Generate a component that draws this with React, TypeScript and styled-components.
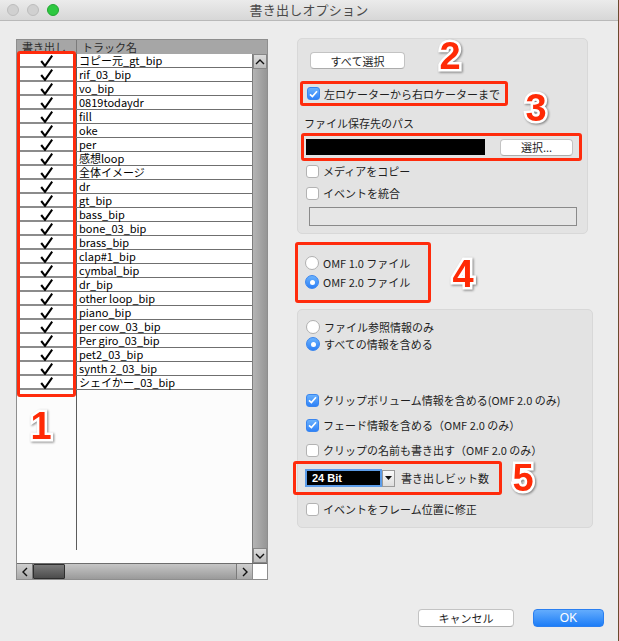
import React from "react";
import styled, { createGlobalStyle } from "styled-components";

const GlobalStyle = createGlobalStyle`
  html, body {
    margin: 0;
    padding: 0;
  }
  body {
    background: #6b4a2e;
    font-family: "Noto Sans CJK JP", "Noto Sans", sans-serif;
    color: #222;
  }
`;

const tracks = [
  "コピー元_gt_bip",
  "rif_03_bip",
  "vo_bip",
  "0819todaydr",
  "fill",
  "oke",
  "per",
  "感想loop",
  "全体イメージ",
  "dr",
  "gt_bip",
  "bass_bip",
  "bone_03_bip",
  "brass_bip",
  "clap#1_bip",
  "cymbal_bip",
  "dr_bip",
  "other loop_bip",
  "piano_bip",
  "per cow_03_bip",
  "Per giro_03_bip",
  "pet2_03_bip",
  "synth 2_03_bip",
  "シェイかー_03_bip",
];

const App = () => {
  return (
    <>
      <GlobalStyle />
      <Window>
        <TitleBar>
          <Lights>
            <Light />
            <Light />
            <Light $color="#2dc840" $edge="#22a632" />
          </Lights>
          <Title>書き出しオプション</Title>
          <span />
        </TitleBar>

        <Body>
          <Main>
            <Table>
              <Header>
                <HeadCell $w={60}>書き出し</HeadCell>
                <HeadCell>トラック名</HeadCell>
              </Header>
              <TableBody>
                <RowsArea>
                  {tracks.map((name) => (
                    <Row key={name}>
                      <CheckCell>
                        <svg width="13" height="12" viewBox="0 0 13 12">
                          <path d="M1.2 6 L5 10.8 L12.2 0.6" fill="none" stroke="#000" strokeWidth="2.1" />
                        </svg>
                      </CheckCell>
                      <NameCell>{name}</NameCell>
                    </Row>
                  ))}
                  <Filler>
                    <FillerColumn />
                  </Filler>
                </RowsArea>
                <VScroll>
                  <ArrowButton>
                    <svg width="10" height="6" viewBox="0 0 10 6">
                      <path d="M1 5 L5 1 L9 5" fill="none" stroke="#111" strokeWidth="1.4" />
                    </svg>
                  </ArrowButton>
                  <ArrowButton>
                    <svg width="10" height="6" viewBox="0 0 10 6">
                      <path d="M1 1 L5 5 L9 1" fill="none" stroke="#111" strokeWidth="1.4" />
                    </svg>
                  </ArrowButton>
                </VScroll>
              </TableBody>
              <HScroll>
                <HTrack>
                  <HArrow>
                    <svg width="6" height="10" viewBox="0 0 6 10">
                      <path d="M5 1 L1 5 L5 9" fill="none" stroke="#111" strokeWidth="1.4" />
                    </svg>
                  </HArrow>
                  <Thumb />
                  <HSpace />
                  <HArrow $right>
                    <svg width="6" height="10" viewBox="0 0 6 10">
                      <path d="M1 1 L5 5 L1 9" fill="none" stroke="#111" strokeWidth="1.4" />
                    </svg>
                  </HArrow>
                </HTrack>
                <Corner />
              </HScroll>
              <ColumnMark />
            </Table>

            <RightColumn>
              <Panel $w={291} $h={196}>
                <PlainButton $w={95} $ml={12} $mt={13}>
                  すべて選択
                </PlainButton>
                <Highlight $w={208} $h={25} $ml={2} $mt={12} $pl={4}>
                  <Check checked />
                  <Label>左ロケーターから右ロケーターまで</Label>
                </Highlight>
                <Caption>ファイル保存先のパス</Caption>
                <Highlight $w={281} $h={28} $ml={3} $mt={3} $pl={2} $gap={15}>
                  <PathField />
                  <PlainButton $w={73}>選択...</PlainButton>
                </Highlight>
                <OptionRow $mt={3}>
                  <Check />
                  <Label>メディアをコピー</Label>
                </OptionRow>
                <OptionRow $mt={8}>
                  <Check />
                  <Label>イベントを統合</Label>
                </OptionRow>
                <EmptyField />
              </Panel>

              <FormatBox>
                <OptionRow $ml={0}>
                  <Radio />
                  <Label>OMF 1.0 ファイル</Label>
                </OptionRow>
                <OptionRow $ml={0} $mt={5}>
                  <Radio selected />
                  <Label>OMF 2.0 ファイル</Label>
                </OptionRow>
              </FormatBox>

              <Panel $w={296} $h={219} $mt={6} $pt={10}>
                <OptionRow>
                  <Radio />
                  <Label>ファイル参照情報のみ</Label>
                </OptionRow>
                <OptionRow $mt={3}>
                  <Radio selected />
                  <Label>すべての情報を含める</Label>
                </OptionRow>
                <OptionRow $mt={42}>
                  <Check checked />
                  <Label>クリップボリューム情報を含める(OMF 2.0 のみ)</Label>
                </OptionRow>
                <OptionRow $mt={11}>
                  <Check checked />
                  <Label>フェード情報を含める（OMF 2.0 のみ）</Label>
                </OptionRow>
                <OptionRow $mt={11}>
                  <Check />
                  <Label>クリップの名前も書き出す（OMF 2.0 のみ）</Label>
                </OptionRow>
                <Highlight $w={209} $h={34} $ml={-5} $mt={4} $pl={9}>
                  <BitSelect>24 Bit</BitSelect>
                  <SelectArrow>
                    <svg width="7" height="4" viewBox="0 0 7 4">
                      <path d="M0 0 L7 0 L3.5 4 Z" fill="#111" />
                    </svg>
                  </SelectArrow>
                  <Label $ml={6}>書き出しビット数</Label>
                </Highlight>
                <OptionRow $mt={7}>
                  <Check />
                  <Label>イベントをフレーム位置に修正</Label>
                </OptionRow>
              </Panel>
            </RightColumn>
          </Main>

          <Footer>
            <PlainButton $w={96} $h={18}>
              キャンセル
            </PlainButton>
            <OkButton>OK</OkButton>
          </Footer>
        </Body>

        <Num $x={41} $y={426}>1</Num>
        <Num $x={450} $y={56}>2</Num>
        <Num $x={536} $y={108}>3</Num>
        <Num $x={463} $y={274}>4</Num>
        <Num $x={523} $y={478}>5</Num>
      </Window>
    </>
  );
};

const Check = ({ checked }: { checked?: boolean }) => (
  <CheckBox $checked={checked}>
    {checked && (
      <svg width="9" height="8" viewBox="0 0 9 8">
        <path d="M1 4.3 L3.4 6.6 L8 1.2" fill="none" stroke="#fff" strokeWidth="1.7" />
      </svg>
    )}
  </CheckBox>
);

const Radio = ({ selected }: { selected?: boolean }) => (
  <RadioCircle $selected={selected}>{selected && <RadioDot />}</RadioCircle>
);

export default App;

const Window = styled.div`
  position: relative;
  width: 618px;
  height: 641px;
  background: #ececec;
  display: flex;
  flex-direction: column;
  overflow: hidden;
`;

const TitleBar = styled.div`
  height: 20px;
  border-bottom: 1px solid #b9b9b9;
  background: linear-gradient(#ebebeb, #d7d7d7);
  display: grid;
  grid-template-columns: 1fr auto 1fr;
  align-items: center;
`;

const Lights = styled.div`
  display: flex;
  gap: 8px;
  padding-left: 7px;
`;

const Light = styled.span<{ $color?: string; $edge?: string }>`
  width: 12px;
  height: 12px;
  border-radius: 50%;
  box-sizing: border-box;
  background: ${({ $color }) => $color || "#d0d0d0"};
  border: 1px solid ${({ $edge }) => $edge || "#bdbdbd"};
`;

const Title = styled.div`
  font-size: 13px;
  line-height: 16px;
  color: #4a4a4a;
  letter-spacing: 0.2px;
`;

const Body = styled.div`
  padding: 18px 14px 0 16px;
  display: flex;
  flex-direction: column;
`;

const Main = styled.div`
  display: flex;
  gap: 29px;
  align-items: flex-start;
`;

const Table = styled.div`
  position: relative;
  width: 252px;
  height: 541px;
  box-sizing: border-box;
  border: 1px solid #8e8e8e;
  background: #fcfcfc;
  display: flex;
  flex-direction: column;
`;

const Header = styled.div`
  height: 14px;
  flex: none;
  display: flex;
  background: #a6a6a6;
`;

const HeadCell = styled.div<{ $w?: number }>`
  ${({ $w }) => ($w ? `width: ${$w}px; flex: none;` : "flex: 1;")}
  box-sizing: border-box;
  border-right: 1px solid #7b7b7b;
  padding-left: 5px;
  font-size: 11px;
  line-height: 15px;
  color: #2b2b2b;
  white-space: nowrap;
  overflow: hidden;
  &:last-child {
    border-right: none;
  }
`;

const TableBody = styled.div`
  flex: 1;
  display: flex;
  min-height: 0;
`;

const RowsArea = styled.div`
  flex: 1;
  display: flex;
  flex-direction: column;
`;

const Row = styled.div`
  height: 14px;
  display: flex;
`;

const CheckCell = styled.div`
  width: 60px;
  flex: none;
  box-sizing: border-box;
  border-right: 1px solid #5c5c5c;
  border-bottom: 2px solid #8b8b8b;
  background: #fff;
  display: flex;
  align-items: center;
  justify-content: center;
  padding-top: 1px;
`;

const NameCell = styled.div`
  flex: 1;
  box-sizing: border-box;
  border-bottom: 1px solid #6f6f6f;
  background: #fff;
  padding-left: 2px;
  font-size: 11px;
  line-height: 12px;
  color: #000;
  white-space: nowrap;
`;

const Filler = styled.div`
  flex: 1;
  display: flex;
  padding-bottom: 13px;
`;

const FillerColumn = styled.div`
  width: 60px;
  box-sizing: border-box;
  border-right: 1px solid #5c5c5c;
`;

const VScroll = styled.div`
  width: 14px;
  flex: none;
  background: linear-gradient(to right, #b4b4b4, #969696);
  border-left: 1px solid #7d7d7d;
  display: flex;
  flex-direction: column;
  justify-content: space-between;
`;

const ArrowButton = styled.div`
  height: 15px;
  box-sizing: border-box;
  border: 1px solid #878787;
  background: linear-gradient(#dcdcdc, #bdbdbd);
  display: flex;
  align-items: center;
  justify-content: center;
`;

const HScroll = styled.div`
  height: 15px;
  flex: none;
  display: flex;
  border-top: 1px solid #6d6d6d;
`;

const HTrack = styled.div`
  flex: 1;
  display: flex;
  background: linear-gradient(#c6c6c6, #9a9a9a);
`;

const HArrow = styled.div<{ $right?: boolean }>`
  width: 16px;
  box-sizing: border-box;
  ${({ $right }) => ($right ? "border-left" : "border-right")}: 1px solid #7a7a7a;
  background: linear-gradient(#cfcfcf, #a9a9a9);
  display: flex;
  align-items: center;
  justify-content: center;
`;

const Thumb = styled.div`
  width: 32px;
  box-sizing: border-box;
  border: 1px solid #2e2e2e;
  border-radius: 1px;
  background: linear-gradient(#7a7a7a, #4c4c4c);
`;

const HSpace = styled.div`
  flex: 1;
`;

const Corner = styled.div`
  width: 14px;
  background: #fff;
  border-left: 1px solid #8e8e8e;
`;

const ColumnMark = styled.div`
  position: absolute;
  left: 0;
  top: 11px;
  width: 59px;
  height: 346px;
  box-sizing: border-box;
  border: 3px solid #ff2b0c;
  border-radius: 3px;
`;

const RightColumn = styled.div`
  display: flex;
  flex-direction: column;
  margin-top: -1px;
`;

const Panel = styled.div<{ $w: number; $h: number; $mt?: number; $pt?: number }>`
  width: ${({ $w }) => $w}px;
  height: ${({ $h }) => $h}px;
  margin-top: ${({ $mt }) => $mt || 0}px;
  padding-top: ${({ $pt }) => $pt || 0}px;
  box-sizing: border-box;
  background: #e3e3e3;
  border: 1px solid #d8d8d8;
  border-radius: 5px;
  display: flex;
  flex-direction: column;
  align-items: flex-start;
`;

const PlainButton = styled.div<{ $w: number; $h?: number; $ml?: number; $mt?: number }>`
  width: ${({ $w }) => $w}px;
  height: ${({ $h }) => $h || 17}px;
  margin-left: ${({ $ml }) => $ml || 0}px;
  margin-top: ${({ $mt }) => $mt || 0}px;
  flex: none;
  box-sizing: border-box;
  background: #fff;
  border: 1px solid #c3c3c3;
  border-bottom-color: #acacac;
  border-radius: 4px;
  display: flex;
  align-items: center;
  justify-content: center;
  font-size: 11px;
  line-height: 14px;
  color: #1d1d1d;
`;

const Highlight = styled.div<{
  $w: number;
  $h: number;
  $ml: number;
  $mt: number;
  $pl: number;
  $gap?: number;
}>`
  width: ${({ $w }) => $w}px;
  height: ${({ $h }) => $h}px;
  margin-left: ${({ $ml }) => $ml}px;
  margin-top: ${({ $mt }) => $mt}px;
  padding-left: ${({ $pl }) => $pl}px;
  gap: ${({ $gap }) => $gap || 0}px;
  flex: none;
  box-sizing: border-box;
  border: 3px solid #ff2b0c;
  border-radius: 3px;
  display: flex;
  align-items: center;
`;

const Label = styled.span<{ $ml?: number }>`
  margin-left: ${({ $ml }) => ($ml === undefined ? 4 : $ml)}px;
  font-size: 11px;
  line-height: 14px;
  color: #1e1e1e;
  white-space: nowrap;
`;

const Caption = styled.div`
  margin: 10px 0 0 6px;
  font-size: 11px;
  line-height: 14px;
  color: #1e1e1e;
`;

const PathField = styled.div`
  width: 179px;
  height: 16px;
  background: #000;
`;

const OptionRow = styled.div<{ $mt?: number; $ml?: number }>`
  height: 14px;
  margin-top: ${({ $mt }) => $mt || 0}px;
  margin-left: ${({ $ml }) => ($ml === undefined ? 8 : $ml)}px;
  display: flex;
  align-items: center;
`;

const CheckBox = styled.span<{ $checked?: boolean }>`
  width: 13px;
  height: 13px;
  flex: none;
  box-sizing: border-box;
  border-radius: 3px;
  display: flex;
  align-items: center;
  justify-content: center;
  background: ${({ $checked }) => ($checked ? "linear-gradient(#69b1fd, #2f82f8)" : "#fff")};
  border: 1px solid ${({ $checked }) => ($checked ? "#3a86ef" : "#b3b3b3")};
`;

const RadioCircle = styled.span<{ $selected?: boolean }>`
  width: 14px;
  height: 14px;
  flex: none;
  box-sizing: border-box;
  border-radius: 50%;
  display: flex;
  align-items: center;
  justify-content: center;
  background: ${({ $selected }) => ($selected ? "linear-gradient(#6ab2fd, #2d80f7)" : "#fff")};
  border: 1px solid ${({ $selected }) => ($selected ? "#3a86ef" : "#b0b0b0")};
`;

const RadioDot = styled.span`
  width: 5px;
  height: 5px;
  border-radius: 50%;
  background: #fff;
`;

const EmptyField = styled.div`
  width: 268px;
  height: 19px;
  margin: 7px 0 0 11px;
  box-sizing: border-box;
  border: 1px solid #8a8a8a;
  background: #e6e6e6;
`;

const FormatBox = styled.div`
  width: 136px;
  height: 61px;
  margin: 8px 0 0 -2px;
  box-sizing: border-box;
  padding: 11px 0 0 7px;
  border: 3px solid #ff2b0c;
  border-radius: 3px;
  background: #e3e3e3;
  display: flex;
  flex-direction: column;
`;

const BitSelect = styled.div`
  width: 77px;
  height: 18px;
  box-sizing: border-box;
  border: 2px solid #5c9ce8;
  background: #000;
  padding-left: 5px;
  font-family: "Liberation Sans", Arial, sans-serif;
  font-weight: 700;
  font-size: 11px;
  line-height: 14px;
  color: #fff;
`;

const SelectArrow = styled.div`
  width: 13px;
  height: 17px;
  box-sizing: border-box;
  border: 1px solid #9a9a9a;
  background: linear-gradient(#fafafa, #dedede);
  display: flex;
  align-items: center;
  justify-content: center;
`;

const Footer = styled.div`
  margin-top: 29px;
  display: flex;
  justify-content: flex-end;
  gap: 19px;
`;

const OkButton = styled.div`
  width: 71px;
  height: 18px;
  box-sizing: border-box;
  border-radius: 4px;
  background: linear-gradient(#63acfd, #1d7df7);
  border: 1px solid #2a7ff0;
  display: flex;
  align-items: center;
  justify-content: center;
  font-family: "Liberation Sans", Arial, sans-serif;
  font-size: 12px;
  color: #fff;
`;

const Num = styled.span<{ $x: number; $y: number }>`
  position: absolute;
  left: ${({ $x }) => $x}px;
  top: ${({ $y }) => $y}px;
  transform: translate(-50%, -50%);
  font-family: "Liberation Sans", Arial, sans-serif;
  font-weight: 700;
  font-size: 38px;
  line-height: 38px;
  color: #ff2a05;
  -webkit-text-stroke: 5px #fff;
  paint-order: stroke fill;
  filter: drop-shadow(1px 1px 1px rgba(0, 0, 0, 0.45));
`;
